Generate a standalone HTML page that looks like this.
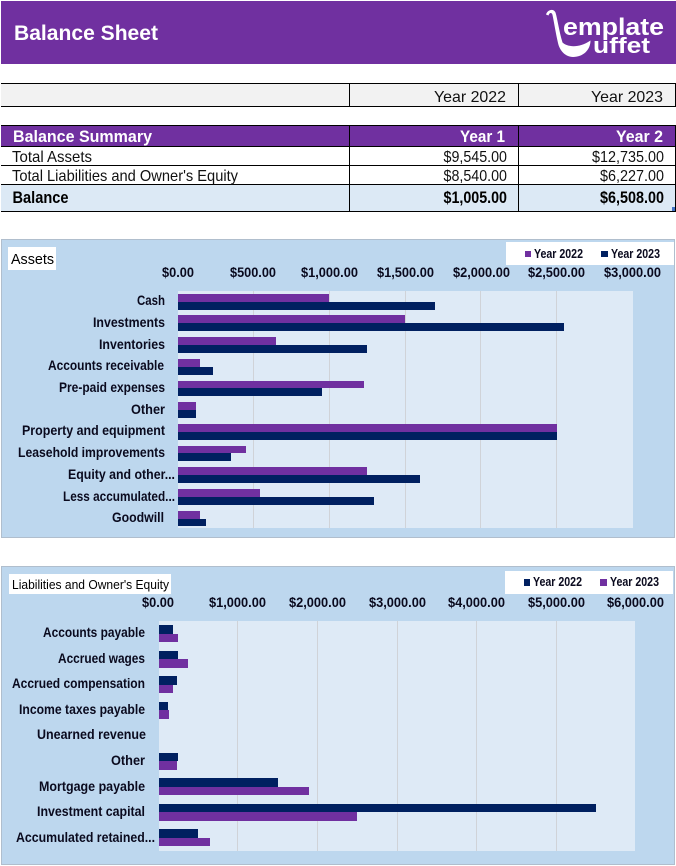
<!DOCTYPE html>
<html><head><meta charset="utf-8"><title>Balance Sheet</title>
<style>
html,body{margin:0;padding:0;background:#fff;width:676px;height:866px;overflow:hidden}
svg{display:block}
text{font-family:"Liberation Sans",Arial,sans-serif;fill:#000}
.t{font-size:16px;fill:#111}
.tb{font-size:16.5px;font-weight:bold}
.w{font-size:17px;font-weight:bold;fill:#fff}
.c{font-size:14px;font-weight:bold;fill:#0a0a1e}
.l{font-size:13px;font-weight:bold;fill:#0a0a1e}
.p{fill:#7030A0}
.n{fill:#002060}
.g{stroke:#d0d3d8;stroke-width:1}
</style></head><body>
<svg width="676" height="866" viewBox="0 0 676 866" xmlns="http://www.w3.org/2000/svg">
<rect x="1" y="1" width="675" height="63" fill="#7030A0"/>
<text x="14" y="40" textLength="144" lengthAdjust="spacingAndGlyphs" style="font-size:21.5px;font-weight:bold;fill:#fff">Balance Sheet</text>
<!-- logo -->
<path d="M546 14.5 C547.5 9.5 553.5 8 555.5 12.5 C557.5 19 559 31 562.5 42.5 C567 47 579 48.5 590.5 40.5 C590.5 50 583 57 573 57 C565 57 559.5 50 558 43 C555.5 32 554 22 552.5 15 C552 12.5 549.5 12 548.5 15.5 Z" fill="#fff"/>
<text x="563" y="35" textLength="101" lengthAdjust="spacingAndGlyphs" style="font-size:24px;font-weight:bold;fill:#fff">emplate</text>
<text x="593" y="53" textLength="57" lengthAdjust="spacingAndGlyphs" style="font-size:22px;font-weight:bold;fill:#fff">uffet</text>
<!-- table 1 -->
<rect x="1" y="83" width="675" height="23" fill="#F2F2F2"/>
<g fill="#000">
<rect x="1" y="83" width="675" height="1"/><rect x="1" y="106" width="675" height="1"/>
<rect x="349" y="83" width="1" height="24"/><rect x="518" y="83" width="1" height="24"/><rect x="675" y="83" width="1" height="24"/>
</g>
<text class="t" x="434" y="102" textLength="72" lengthAdjust="spacingAndGlyphs">Year 2022</text>
<text class="t" x="591" y="102" textLength="72" lengthAdjust="spacingAndGlyphs">Year 2023</text>
<!-- table 2 -->
<rect x="1" y="125" width="675" height="21" fill="#7030A0"/>
<rect x="1" y="185" width="675" height="26" fill="#DCE9F5"/>
<g fill="#000">
<rect x="1" y="125" width="675" height="1"/><rect x="1" y="146" width="675" height="1"/><rect x="1" y="165" width="675" height="1"/><rect x="1" y="184" width="675" height="1"/><rect x="1" y="211" width="675" height="1"/>
<rect x="349" y="125" width="1" height="87"/><rect x="518" y="125" width="1" height="87"/><rect x="675" y="125" width="1" height="87"/>
</g>
<rect x="672" y="207" width="3" height="4" fill="#4472C4"/>
<text class="w" x="13" y="142" textLength="139" lengthAdjust="spacingAndGlyphs">Balance Summary</text>
<text class="w" x="460" y="142" textLength="45" lengthAdjust="spacingAndGlyphs">Year 1</text>
<text class="w" x="616" y="142" textLength="47" lengthAdjust="spacingAndGlyphs">Year 2</text>
<text class="t" x="12" y="162" textLength="80" lengthAdjust="spacingAndGlyphs">Total Assets</text>
<text class="t" x="12" y="181" textLength="226" lengthAdjust="spacingAndGlyphs">Total Liabilities and Owner's Equity</text>
<text class="tb" x="12.5" y="203" textLength="56" lengthAdjust="spacingAndGlyphs">Balance</text>
<text class="t" x="443.5" y="162" textLength="63.5" lengthAdjust="spacingAndGlyphs">$9,545.00</text>
<text class="t" x="592" y="162" textLength="72" lengthAdjust="spacingAndGlyphs">$12,735.00</text>
<text class="t" x="443.5" y="181" textLength="63.5" lengthAdjust="spacingAndGlyphs">$8,540.00</text>
<text class="t" x="600" y="181" textLength="64" lengthAdjust="spacingAndGlyphs">$6,227.00</text>
<text class="tb" x="443.5" y="203" textLength="63.5" lengthAdjust="spacingAndGlyphs">$1,005.00</text>
<text class="tb" x="600" y="203" textLength="64" lengthAdjust="spacingAndGlyphs">$6,508.00</text>

<!-- chart 1 -->
<rect x="1.5" y="239.5" width="673" height="298" fill="#BDD7EE" stroke="#B0BECD"/>
<rect x="178" y="291" width="455" height="237" fill="#DEEAF6"/>
<path class="g" d="M253.5 291V528M329.5 291V528M405.5 291V528M480.5 291V528M556.5 291V528"/>
<rect x="506" y="242" width="168" height="23" fill="#fff"/>
<rect class="p" x="525" y="251" width="6" height="6"/>
<text class="l" x="534" y="258" textLength="49" lengthAdjust="spacingAndGlyphs">Year 2022</text>
<rect class="n" x="601" y="251" width="7" height="6"/>
<text class="l" x="611" y="258" textLength="49" lengthAdjust="spacingAndGlyphs">Year 2023</text>
<rect x="8" y="247" width="48" height="23" fill="#fff"/>
<text x="11" y="264" textLength="43" lengthAdjust="spacingAndGlyphs" style="font-size:14.5px">Assets</text>
<g>
<text class="c" x="162" y="277" textLength="32" lengthAdjust="spacingAndGlyphs">$0.00</text>
<text class="c" x="230" y="277" textLength="46" lengthAdjust="spacingAndGlyphs">$500.00</text>
<text class="c" x="301" y="277" textLength="57" lengthAdjust="spacingAndGlyphs">$1,000.00</text>
<text class="c" x="377" y="277" textLength="57" lengthAdjust="spacingAndGlyphs">$1,500.00</text>
<text class="c" x="453" y="277" textLength="57" lengthAdjust="spacingAndGlyphs">$2,000.00</text>
<text class="c" x="528" y="277" textLength="57" lengthAdjust="spacingAndGlyphs">$2,500.00</text>
<text class="c" x="604" y="277" textLength="57" lengthAdjust="spacingAndGlyphs">$3,000.00</text>
</g>
<g>
<text class="c" x="137" y="305" textLength="28" lengthAdjust="spacingAndGlyphs">Cash</text>
<text class="c" x="93" y="327" textLength="72" lengthAdjust="spacingAndGlyphs">Investments</text>
<text class="c" x="99" y="349" textLength="66" lengthAdjust="spacingAndGlyphs">Inventories</text>
<text class="c" x="48" y="370" textLength="116" lengthAdjust="spacingAndGlyphs">Accounts receivable</text>
<text class="c" x="59" y="392" textLength="106" lengthAdjust="spacingAndGlyphs">Pre-paid expenses</text>
<text class="c" x="131" y="414" textLength="34" lengthAdjust="spacingAndGlyphs">Other</text>
<text class="c" x="22" y="435" textLength="143" lengthAdjust="spacingAndGlyphs">Property and equipment</text>
<text class="c" x="18" y="457" textLength="147" lengthAdjust="spacingAndGlyphs">Leasehold improvements</text>
<text class="c" x="68" y="479" textLength="107" lengthAdjust="spacingAndGlyphs">Equity and other...</text>
<text class="c" x="63" y="501" textLength="112" lengthAdjust="spacingAndGlyphs">Less accumulated...</text>
<text class="c" x="112" y="522" textLength="52" lengthAdjust="spacingAndGlyphs">Goodwill</text>
</g>
<g class="p">
<rect x="178" y="294" width="151" height="8"/>
<rect x="178" y="315" width="227" height="8"/>
<rect x="178" y="337" width="98" height="8"/>
<rect x="178" y="359" width="22" height="8"/>
<rect x="178" y="381" width="186" height="7"/>
<rect x="178" y="402" width="18" height="8"/>
<rect x="178" y="424" width="379" height="8"/>
<rect x="178" y="446" width="68" height="7"/>
<rect x="178" y="467" width="189" height="8"/>
<rect x="178" y="489" width="82" height="8"/>
<rect x="178" y="511" width="22" height="8"/>
</g>
<g class="n">
<rect x="178" y="302" width="257" height="8"/>
<rect x="178" y="323" width="386" height="8"/>
<rect x="178" y="345" width="189" height="8"/>
<rect x="178" y="367" width="35" height="8"/>
<rect x="178" y="388" width="144" height="8"/>
<rect x="178" y="410" width="18" height="8"/>
<rect x="178" y="432" width="379" height="8"/>
<rect x="178" y="453" width="53" height="8"/>
<rect x="178" y="475" width="242" height="8"/>
<rect x="178" y="497" width="196" height="8"/>
<rect x="178" y="519" width="28" height="7"/>
</g>

<!-- chart 2 -->
<rect x="1.5" y="566.5" width="673" height="298" fill="#BDD7EE" stroke="#B0BECD"/>
<rect x="159" y="621" width="476" height="230" fill="#DEEAF6"/>
<path class="g" d="M237.5 621V851M317.5 621V851M397.5 621V851M476.5 621V851M556.5 621V851"/>
<rect x="505" y="571" width="168" height="23" fill="#fff"/>
<rect class="n" x="524" y="579" width="6" height="7"/>
<text class="l" x="533" y="586" textLength="49" lengthAdjust="spacingAndGlyphs">Year 2022</text>
<rect class="p" x="600" y="579" width="7" height="7"/>
<text class="l" x="610" y="586" textLength="49" lengthAdjust="spacingAndGlyphs">Year 2023</text>
<rect x="9" y="574" width="162" height="20" fill="#fff"/>
<text x="12" y="589" textLength="157" lengthAdjust="spacingAndGlyphs" style="font-size:13px">Liabilities and Owner's Equity</text>
<g>
<text class="c" x="142" y="607" textLength="32" lengthAdjust="spacingAndGlyphs">$0.00</text>
<text class="c" x="209" y="607" textLength="57" lengthAdjust="spacingAndGlyphs">$1,000.00</text>
<text class="c" x="289" y="607" textLength="57" lengthAdjust="spacingAndGlyphs">$2,000.00</text>
<text class="c" x="369" y="607" textLength="57" lengthAdjust="spacingAndGlyphs">$3,000.00</text>
<text class="c" x="448" y="607" textLength="57" lengthAdjust="spacingAndGlyphs">$4,000.00</text>
<text class="c" x="528" y="607" textLength="57" lengthAdjust="spacingAndGlyphs">$5,000.00</text>
<text class="c" x="607" y="607" textLength="57" lengthAdjust="spacingAndGlyphs">$6,000.00</text>
</g>
<g>
<text class="c" x="43" y="637" textLength="102" lengthAdjust="spacingAndGlyphs">Accounts payable</text>
<text class="c" x="58" y="663" textLength="87" lengthAdjust="spacingAndGlyphs">Accrued wages</text>
<text class="c" x="12" y="688" textLength="133" lengthAdjust="spacingAndGlyphs">Accrued compensation</text>
<text class="c" x="19" y="714" textLength="126" lengthAdjust="spacingAndGlyphs">Income taxes payable</text>
<text class="c" x="37" y="739" textLength="109" lengthAdjust="spacingAndGlyphs">Unearned revenue</text>
<text class="c" x="111" y="765" textLength="34" lengthAdjust="spacingAndGlyphs">Other</text>
<text class="c" x="39" y="791" textLength="106" lengthAdjust="spacingAndGlyphs">Mortgage payable</text>
<text class="c" x="37" y="816" textLength="108" lengthAdjust="spacingAndGlyphs">Investment capital</text>
<text class="c" x="16" y="842" textLength="139" lengthAdjust="spacingAndGlyphs">Accumulated retained...</text>
</g>
<g class="n">
<rect x="159" y="625" width="14" height="9"/>
<rect x="159" y="651" width="19" height="8"/>
<rect x="159" y="676" width="18" height="9"/>
<rect x="159" y="702" width="9" height="8"/>
<rect x="159" y="753" width="19" height="8"/>
<rect x="159" y="778" width="119" height="9"/>
<rect x="159" y="804" width="437" height="8"/>
<rect x="159" y="829" width="39" height="9"/>
</g>
<g class="p">
<rect x="159" y="634" width="19" height="8"/>
<rect x="159" y="659" width="29" height="9"/>
<rect x="159" y="685" width="14" height="8"/>
<rect x="159" y="710" width="10" height="9"/>
<rect x="159" y="761" width="18" height="9"/>
<rect x="159" y="787" width="150" height="8"/>
<rect x="159" y="812" width="198" height="9"/>
<rect x="159" y="838" width="51" height="8"/>
</g>
</svg>
</body></html>
